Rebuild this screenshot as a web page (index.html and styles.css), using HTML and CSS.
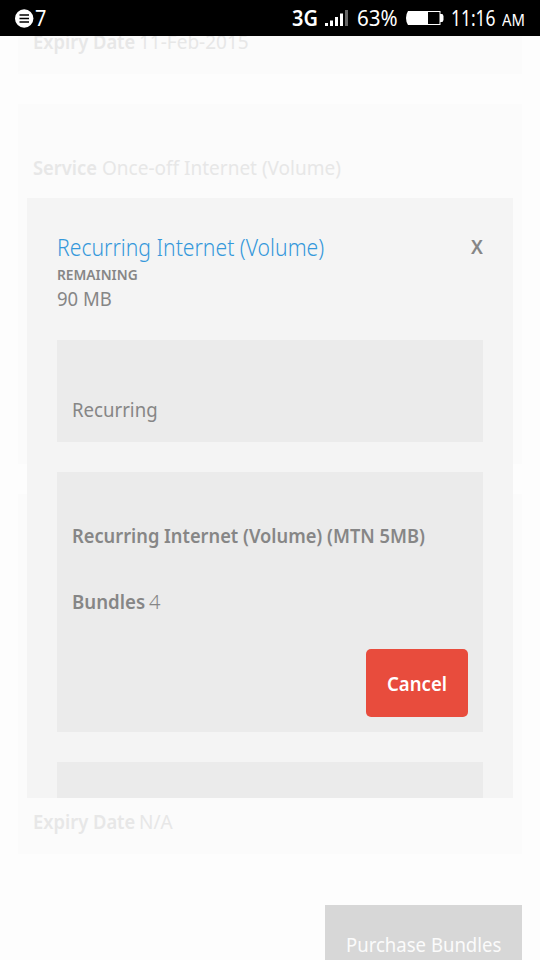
FILE: index.html
```html
<!DOCTYPE html>
<html lang="en">
<head>
<meta charset="utf-8">
<title>Bundles</title>
<link rel="stylesheet" href="styles.css">
</head>
<body>
<header class="status">
  <svg class="notice" width="19" height="19" viewBox="0 0 19 19"><circle cx="9.2" cy="9.5" r="9.2" fill="#fff"/><path d="M4.500 6h9.500M4.500 9.500h9.500M4.500 13h9.500" stroke="#000" stroke-width="1.300"/></svg>
  <div class="count"><span>7</span></div>
  <div class="network"><span>3G</span></div>
  <svg class="signal" width="24" height="18" viewBox="0 0 24 18"><path d="M0 14h3v3H0zM5 11.500h3v5.500H5zM10 8h3v9h-3zM15 4.500h3v12.500h-3z" fill="#fff"/><path d="M20 1h3v16h-3z" fill="#666"/></svg>
  <div class="percent"><span>63%</span></div>
  <svg class="battery" width="38" height="14" viewBox="0 0 38 14"><path d="M2 0H34.500V3H36.500L37.500 5V9L36.500 11H34.500V14H2Q0 11 0 7T2 0Z" fill="#fff"/><path d="M22 1H33.500V13H22Z" fill="#000"/></svg>
  <div class="clock"><span>11:16</span></div>
  <div class="ampm"><span>AM</span></div>
</header>
<main class="page">
  <section class="card first"><p class="row"><b class="expiry">Expiry Date</b><span class="value">11-Feb-2015</span></p></section>
  <section class="card"><p class="row top"><b class="service">Service</b><span class="value">Once-off Internet (Volume)</span></p></section>
  <section class="card last"><p class="row"><b class="expiry">Expiry Date</b><span class="value">N/A</span></p></section>
  <div class="purchase"><span class="buy">Purchase Bundles</span></div>
</main>
<div class="modal">
  <div class="heading"><h1><span class="title">Recurring Internet (Volume)</span></h1><b class="close">X</b></div>
  <p class="label"><span class="remaining">REMAINING</span></p>
  <p class="amount"><span class="mb">90 MB</span></p>
  <section class="box type"><span class="recurring">Recurring</span></section>
  <section class="box detail">
    <p class="line"><b class="bundle">Recurring Internet (Volume) (MTN 5MB)</b></p>
    <p class="line second"><b class="bundles">Bundles</b><span class="four">4</span></p>
    <div class="cancel"><span class="cancel-text">Cancel</span></div>
  </section>
  <section class="box next"></section>
</div>
</body>
</html>
```
FILE: styles.css
```css
* { box-sizing: border-box; }
body { margin: 0; width: 540px; height: 960px; overflow: hidden; position: relative; background: #fdfdfd; color: #868686; font: 20px/30px "Noto Sans", sans-serif; }
p, h1 { margin: 0; }
b { font-weight: 600; }
span, b { display: inline-block; white-space: nowrap; transform-origin: 0 50%; }
.status { display: flex; align-items: center; height: 36px; padding-left: 15px; background: #000; color: #fff; position: relative; font-size: 21px; }
.status > * { flex: none; }
.status span { transform: scaleX(.95); }
.count { width: 258px; padding-left: 1px; }
.network { width: 33px; font-weight: 600; }
.signal { margin-right: 8px; }
.percent { width: 49px; }
.battery { margin-right: 7px; }
.status .percent span { transform: scaleX(.98); }
.clock { width: 51px; }
.status .clock span { transform: scaleX(.83); }
.ampm { font-size: 16px; padding-top: 3px; }
.status .ampm span { transform: scaleX(.93); }
.page { display: flex; flex-direction: column; gap: 30px; padding: 0 18px; height: 924px; overflow: hidden; }
.card { height: 360px; flex: none; padding: 0 15px; background: #fbfbfb; color: #e7e7e7; }
.first { height: 38px; }
.first .row { margin-top: -9px; }
.row { display: flex; }
.row b { transform: scaleX(.917); }
.top { padding-top: 49px; }
.last { display: flex; align-items: flex-end; padding-bottom: 17px; }
.row .expiry { width: 111px; margin-right: -5px; }
.service { width: 69px; }
.value { transform: scaleX(.95); }
.purchase { flex: none; align-self: flex-end; width: 197px; height: 90px; margin-top: 21px; padding: 25px 21px; background: #d7d7d7; color: #fbfbfb; }
.buy { transform: scaleX(.927); }
.modal { position: absolute; left: 27px; top: 198px; width: 486px; height: 600px; padding: 34px 30px 0; background: #f4f4f4; overflow: hidden; }
.heading { display: flex; justify-content: space-between; }
h1 { font-size: 23px; font-weight: 300; line-height: 30px; color: #3498db; }
.title { transform: scaleX(.92); }
.close { transform: scaleX(.93); transform-origin: 100% 50%; }
.label { font-size: 14.5px; font-weight: 600; line-height: 26px; }
.remaining { transform: scaleX(.95) translateY(-1px); }
.amount { line-height: 22px; }
.mb { transform: scaleX(.925); }
.box { background: #ebebeb; padding: 0 15px; margin-bottom: 30px; }
.type { height: 102px; padding-top: 55px; margin-top: 30px; }
.recurring { transform: scaleX(.93); }
.detail { height: 260px; padding-top: 49px; }
.line { display: flex; }
.second { margin-top: 36px; }
.bundle { transform: scaleX(.913); }
.bundles { width: 77px; transform: scaleX(.932); }
.four { font-weight: 300; }
.cancel { width: 102px; height: 68px; margin: 32px 0 0 auto; padding: 20px 21px; border-radius: 5px; background: #e84c3d; color: #fff; font-weight: 600; }
.cancel-text { transform: scaleX(.93); }
.next { height: 100px; }
```
